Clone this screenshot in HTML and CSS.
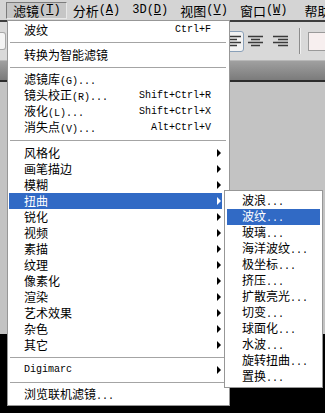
FILE: index.html
```html
<!doctype html>
<html lang="zh-CN">
<head>
	<meta charset="UTF-8">
	<title>滤镜菜单</title>
	<link rel="stylesheet" href="styles.css">
</head>
<body>
	<div class="screen">
		<div class="menubar">
			<span class="mb-item active">滤镜<span class="en">(<u>T</u>)</span></span>
			<span class="mb-item">分析<span class="en">(<u>A</u>)</span></span>
			<span class="mb-item"><span class="en">3D(<u>D</u>)</span></span>
			<span class="mb-item">视图<span class="en">(<u>V</u>)</span></span>
			<span class="mb-item">窗口<span class="en">(<u>W</u>)</span></span>
			<span class="mb-item">帮助</span>
		</div>

		<div class="toolbar">
			<span class="tb-stub"></span>
			<span class="tb-btn selected">
				<svg width="13" height="13" viewBox="0 0 13 13">
					<path d="M0 1.5h13M0 4.5h9M0 7.5h13M0 10.5h9" stroke="#3a3a3a" stroke-width="1.4"/>
				</svg>
			</span>
			<span class="tb-btn">
				<svg width="15" height="13" viewBox="0 0 15 13">
					<path d="M0 1.5h15M3 4.5h9M0 7.5h15M3 10.5h9" stroke="#3a3a3a" stroke-width="1.4"/>
				</svg>
			</span>
			<span class="tb-btn">
				<svg width="15" height="13" viewBox="0 0 15 13">
					<path d="M0 1.5h15M5 4.5h10M0 7.5h15M5 10.5h10" stroke="#3a3a3a" stroke-width="1.4"/>
				</svg>
			</span>
			<span class="tb-sep"></span>
			<span class="tb-field"></span>
		</div>

		<div class="panelbar"></div>
		<div class="workspace"></div>

		<!-- 滤镜菜单 -->
		<ul class="menu">
			<li class="item"><span class="label">波纹</span><span class="key">Ctrl+F</span></li>
			<li class="sep"></li>
			<li class="item"><span class="label">转换为智能滤镜</span></li>
			<li class="sep"></li>
			<li class="item"><span class="label">滤镜库<span class="en">(G)...</span></span></li>
			<li class="item"><span class="label">镜头校正<span class="en">(R)...</span></span><span class="key">Shift+Ctrl+R</span></li>
			<li class="item"><span class="label">液化<span class="en">(L)...</span></span><span class="key">Shift+Ctrl+X</span></li>
			<li class="item"><span class="label">消失点<span class="en">(V)...</span></span><span class="key">Alt+Ctrl+V</span></li>
			<li class="sep"></li>
			<li class="item"><span class="label">风格化</span><span class="arrow"></span></li>
			<li class="item"><span class="label">画笔描边</span><span class="arrow"></span></li>
			<li class="item"><span class="label">模糊</span><span class="arrow"></span></li>
			<li class="item hover"><span class="label">扭曲</span><span class="arrow"></span></li>
			<li class="item"><span class="label">锐化</span><span class="arrow"></span></li>
			<li class="item"><span class="label">视频</span><span class="arrow"></span></li>
			<li class="item"><span class="label">素描</span><span class="arrow"></span></li>
			<li class="item"><span class="label">纹理</span><span class="arrow"></span></li>
			<li class="item"><span class="label">像素化</span><span class="arrow"></span></li>
			<li class="item"><span class="label">渲染</span><span class="arrow"></span></li>
			<li class="item"><span class="label">艺术效果</span><span class="arrow"></span></li>
			<li class="item"><span class="label">杂色</span><span class="arrow"></span></li>
			<li class="item"><span class="label">其它</span><span class="arrow"></span></li>
			<li class="sep"></li>
			<li class="item"><span class="label en">Digimarc</span><span class="arrow"></span></li>
			<li class="sep"></li>
			<li class="item"><span class="label">浏览联机滤镜<span class="en">...</span></span></li>
		</ul>

		<!-- 扭曲 子菜单 -->
		<ul class="menu submenu">
			<li class="item"><span class="label">波浪<span class="en">...</span></span></li>
			<li class="item hover"><span class="label">波纹<span class="en">...</span></span></li>
			<li class="item"><span class="label">玻璃<span class="en">...</span></span></li>
			<li class="item"><span class="label">海洋波纹<span class="en">...</span></span></li>
			<li class="item"><span class="label">极坐标<span class="en">...</span></span></li>
			<li class="item"><span class="label">挤压<span class="en">...</span></span></li>
			<li class="item"><span class="label">扩散亮光<span class="en">...</span></span></li>
			<li class="item"><span class="label">切变<span class="en">...</span></span></li>
			<li class="item"><span class="label">球面化<span class="en">...</span></span></li>
			<li class="item"><span class="label">水波<span class="en">...</span></span></li>
			<li class="item"><span class="label">旋转扭曲<span class="en">...</span></span></li>
			<li class="item"><span class="label">置换<span class="en">...</span></span></li>
		</ul>
	</div>
</body>
</html>
```

FILE: styles.css
```css
body {
	margin: 0;
	background-color: #000;
	font: 400 12px "Noto Sans CJK SC", sans-serif;
	color: #000;
}

ul {
	margin: 0;
	padding: 0;
	list-style: none;
}

.en {
	font-family: "Liberation Mono", monospace;
	font-size: 10px;
}

.screen {
	position: relative;
	overflow: hidden;
	width: 325px;
	height: 413px;
	background-color: #000;
}

/* 菜单栏 */
.menubar {
	display: flex;
	align-items: center;
	height: 20px;
	padding-left: 6px;
	background-color: #d4d4d4;
	border-bottom: 2px solid #3e3e3e;
	font-size: 13px;
	white-space: nowrap;
	overflow: hidden;
}

.menubar .en {
	font-size: 12px;
}

.mb-item {
	display: flex;
	align-items: center;
	flex-shrink: 0;
	height: 15px;
	padding: 0 5px;
	border: 1px solid transparent;
	line-height: 15px;
}

.mb-item.active {
	padding-left: 6px;
	background-color: #c6c6c6;
	border-color: #7c7c7c #e8e8e8 #e8e8e8 #7c7c7c;
}

.mb-item:last-child {
	padding-left: 10px;
}

/* 工具栏 */
.toolbar {
	display: flex;
	align-items: center;
	height: 38px;
	background-color: #d9d9d9;
}

.tb-stub {
	width: 5px;
	height: 16px;
	background-color: #f4f4f4;
	border: 1px solid #a8a8a8;
	border-left: 0;
	border-radius: 0 3px 3px 0;
}

.tb-btn {
	display: flex;
	align-items: center;
	justify-content: center;
	flex-shrink: 0;
	width: 15px;
	height: 19px;
	margin-left: 10px;
}

.tb-btn.selected {
	margin-left: auto;
	width: 17px;
	background-color: #f2f2f2;
	border: 1px solid #8aa0b8;
	border-radius: 3px;
}

.tb-btn:nth-child(3) {
	margin-left: 4px;
}

.tb-sep {
	flex-shrink: 0;
	width: 1px;
	height: 26px;
	margin-left: 11px;
	background-color: #8c8c8c;
	box-shadow: 1px 0 0 #f0f0f0;
}

.tb-field {
	flex-shrink: 0;
	width: 30px;
	height: 17px;
	margin: 0 -15px 0 8px;
	background-color: #f7efef;
	border: 1px solid #9a9a9a;
}

.panelbar {
	height: 19px;
	border-top: 1px solid #b8b8b8;
	border-bottom: 2px solid #2c2c2c;
	background: linear-gradient(#a0a0a0, #7b7b7b);
}

.workspace {
	height: 252px;
	background-color: #c3c3c3;
}

/* 下拉菜单 */
.menu {
	position: absolute;
	left: 7px;
	top: 20px;
	box-sizing: border-box;
	width: 223px;
	padding: 1px 7px 2px 1px;
	background-color: #fff;
	border: 1px solid #979797;
}

.item {
	display: flex;
	align-items: center;
	height: 16px;
	padding: 0 1px 0 15px;
	line-height: 16px;
	white-space: nowrap;
}

.item .label {
	flex: 1;
}

.key {
	margin-right: 10px;
	font-family: "Liberation Mono", monospace;
	font-size: 10px;
}

.arrow {
	width: 0;
	height: 0;
	border-left: 4px solid #000;
	border-top: 4px solid transparent;
	border-bottom: 4px solid transparent;
}

.hover {
	background-color: #316ac5;
	color: #fff;
}

.hover .arrow {
	border-left-color: #fff;
}

.sep {
	height: 1px;
	margin: 4px -4px 4px 1px;
	background-color: #a4a4a4;
}

.submenu {
	left: 224px;
	top: 190px;
	width: 99px;
	padding: 2px;
}
```
